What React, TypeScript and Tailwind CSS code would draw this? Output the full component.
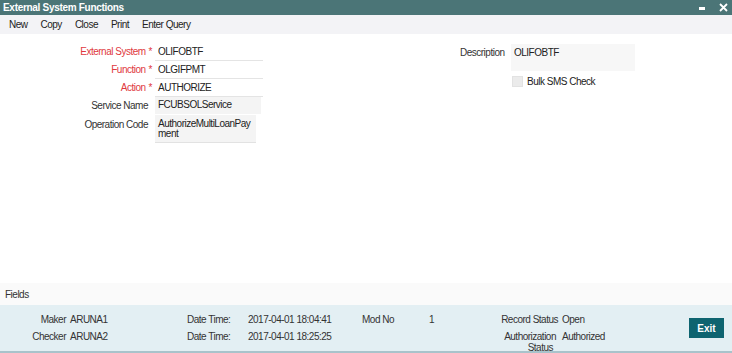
const toolbar = ['New', 'Copy', 'Close', 'Print', 'Enter Query']

const FormRow = ({
  label,
  value,
  required,
  width,
}: {
  label: string
  value: string
  required?: boolean
  width: string
}) => {
  return (
    <div className="flex">
      <div
        className={`w-[155px] shrink-0 text-right leading-[18px] ${
          required ? 'text-[#e0393e] pr-[3px]' : 'text-[#333] pr-[7px]'
        }`}>
        {label}
        {required && <span className="ml-[3px]">*</span>}
      </div>
      <div className={`${width} h-[18px] leading-[18px] border-b border-[#e4e4e4] pl-[3px] text-[#222]`}>
        {value}
      </div>
    </div>
  )
}

export default function App() {
  return (
    <div className="w-[732px] h-[353px] flex flex-col bg-white font-['Liberation_Sans',Arial,sans-serif] text-[10px] tracking-[-0.5px] text-[#333] overflow-hidden">
      {/* title bar */}
      <div className="h-[15px] shrink-0 bg-[#4b7577] flex items-center justify-between pl-[3px] pr-[4px]">
        <span className="text-white font-bold tracking-[-0.3px] leading-none">External System Functions</span>
        <div className="flex items-center gap-[14px]">
          <div className="w-[6px] h-[2.5px] bg-white mt-[2px]" />
          <svg width="9" height="9" viewBox="0 0 9 9">
            <path d="M1 1 L8 8 M8 1 L1 8" stroke="white" strokeWidth="1.8" />
          </svg>
        </div>
      </div>

      {/* toolbar */}
      <div className="h-[19px] shrink-0 bg-[#f3f3f6] flex items-center gap-[13px] pl-[9px] text-[#222]">
        {toolbar.map((t) => (
          <span key={t}>{t}</span>
        ))}
      </div>

      {/* form */}
      <div className="flex-1 flex pt-[9px]">
        <div className="w-[460px] shrink-0 flex flex-col">
          <FormRow label="External System" value="OLIFOBTF" required width="w-[108px]" />
          <FormRow label="Function" value="OLGIFPMT" required width="w-[108px]" />
          <FormRow label="Action" value="AUTHORIZE" required width="w-[108px]" />
          <div className="flex">
            <div className="w-[155px] shrink-0 text-right pr-[7px] leading-[17px]">Service Name</div>
            <div className="w-[106px] h-[17px] leading-[16px] bg-[#f4f4f4] pl-[3px] text-[#222]">
              FCUBSOLService
            </div>
          </div>
          <div className="flex mt-[1px]">
            <div className="w-[155px] shrink-0 text-right pr-[7px] pt-[5px] leading-[10px]">Operation Code</div>
            <div className="w-[101px] h-[28px] bg-[#f4f4f4] border-b border-[#e2e2e2] pl-[3px] pt-[4px] leading-[10px] text-[#222] break-all">
              AuthorizeMultiLoanPayment
            </div>
          </div>
        </div>
        <div className="flex flex-col pt-[1px]">
          <div className="flex">
            <div className="w-[51px] leading-[18px]">Description</div>
            <div className="w-[124px] h-[27px] bg-[#f7f7f7] pl-[3px] leading-[18px] text-[#222]">OLIFOBTF</div>
          </div>
          <div className="flex items-center mt-[3px] ml-[52px]">
            <div className="w-[11px] h-[11px] bg-[#ebebeb] border border-[#e2e2e2]" />
            <span className="ml-[4px] text-[#222]">Bulk SMS Check</span>
          </div>
        </div>
      </div>

      {/* fields */}
      <div className="h-[22px] shrink-0 bg-[#fafafa] flex items-center pl-[5px] text-[#333]">Fields</div>

      {/* audit footer */}
      <div className="h-[48px] shrink-0 bg-[#e3eff3] border-b-2 border-[#a9c3cb] flex pt-[6px] text-[#333]">
        <div className="grid grid-cols-[66px_121px_61px_114px_67px_70px_59px_80px] auto-rows-[17px]">
          <div className="text-right leading-[17px]">Maker</div>
          <div className="pl-[4px] leading-[17px]">ARUNA1</div>
          <div className="leading-[17px]">Date Time:</div>
          <div className="leading-[17px]">2017-04-01 18:04:41</div>
          <div className="leading-[17px]">Mod No</div>
          <div className="leading-[17px]">1</div>
          <div className="text-right leading-[17px]">Record Status</div>
          <div className="pl-[4px] leading-[17px]">Open</div>

          <div className="text-right leading-[17px]">Checker</div>
          <div className="pl-[4px] leading-[17px]">ARUNA2</div>
          <div className="leading-[17px]">Date Time:</div>
          <div className="leading-[17px]">2017-04-01 18:25:25</div>
          <div />
          <div />
          <div className="text-right pr-[2px] pt-[3px] leading-[11px]">
            Authorization
            <br />
            <span className="mr-[3px]">Status</span>
          </div>
          <div className="pl-[4px] leading-[17px]">Authorized</div>
        </div>
        <div className="flex-1 flex justify-end pr-[8px] pt-[7px]">
          <button className="w-[35px] h-[20px] bg-[#0e6470] text-white font-bold tracking-normal">Exit</button>
        </div>
      </div>
    </div>
  )
}
